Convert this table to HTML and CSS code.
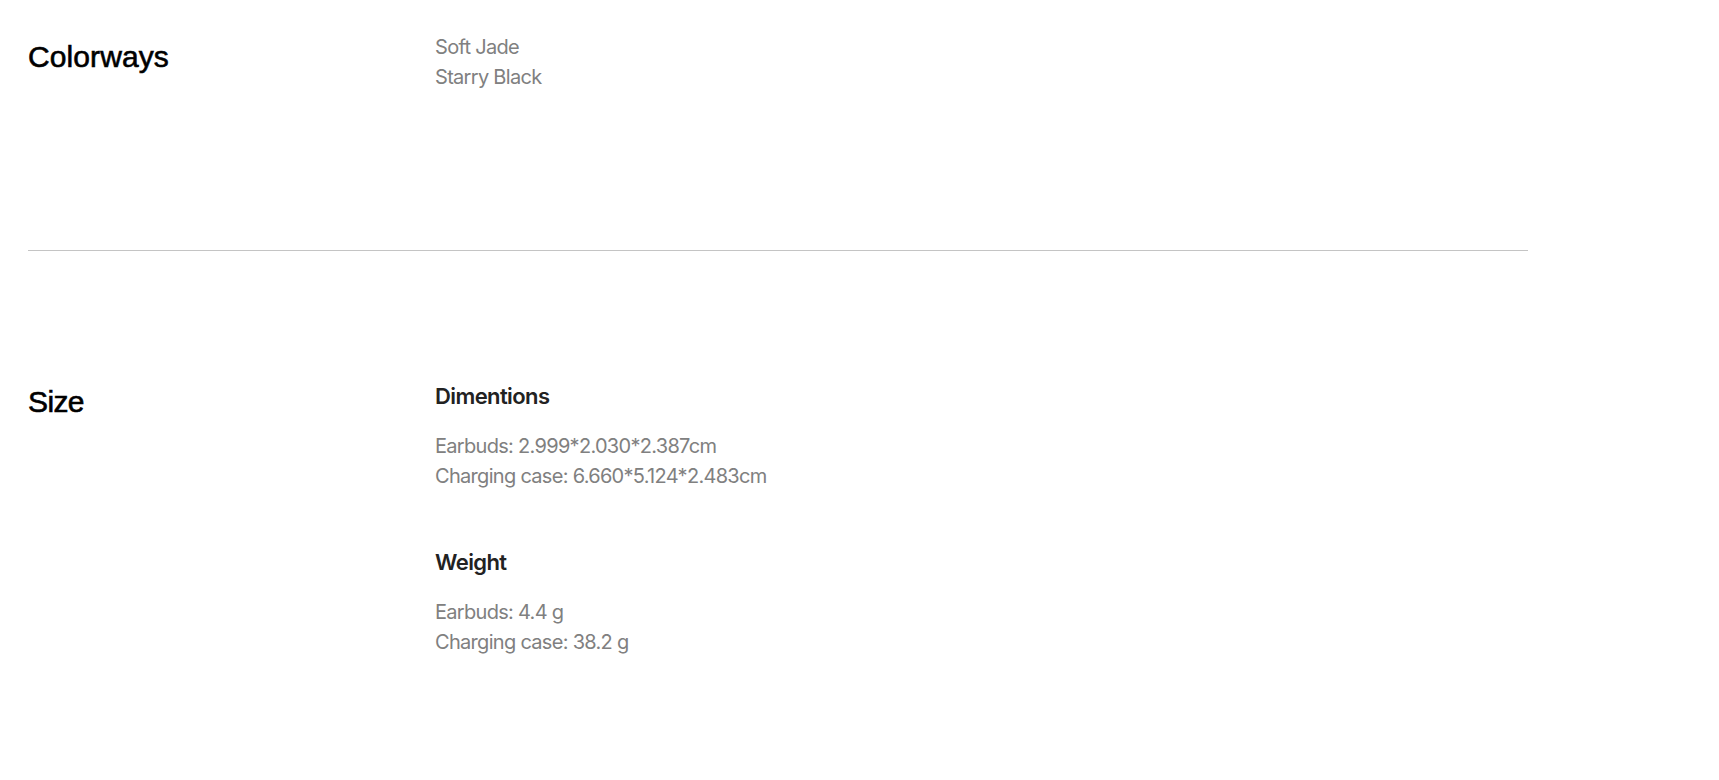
FILE: index.html
```html
<!DOCTYPE html>
<html lang="en">
<head>
<meta charset="utf-8">
<title>Specs</title>
<link rel="stylesheet" href="styles.css">
</head>
<body>
<div class="specs">
  <section class="spec-row spec-row--first">
    <h2 class="spec-title">Colorways</h2>
    <div class="spec-body">
      <div class="spec-group">
        <p class="spec-line">Soft Jade</p>
        <p class="spec-line">Starry Black</p>
      </div>
    </div>
  </section>
  <hr class="spec-divider">
  <section class="spec-row spec-row--second">
    <h2 class="spec-title spec-title--size">Size</h2>
    <div class="spec-body">
      <div class="spec-group">
        <h3 class="spec-sub">Dimentions</h3>
        <p class="spec-line">Earbuds: 2.999*2.030*2.387cm</p>
        <p class="spec-line">Charging case: 6.660*5.124*2.483cm</p>
      </div>
      <div class="spec-group">
        <h3 class="spec-sub">Weight</h3>
        <p class="spec-line">Earbuds: 4.4 g</p>
        <p class="spec-line">Charging case: 38.2 g</p>
      </div>
    </div>
  </section>
</div>
</body>
</html>
```

FILE: styles.css
```css
html, body {
  margin: 0;
  padding: 0;
  background: #ffffff;
}

body {
  font-family: Inter, "Noto Sans", sans-serif;
}

.specs {
  width: 1500px;
  margin-left: 28px;
}

.spec-row {
  display: flex;
  align-items: flex-start;
}

.spec-row--first {
  padding-top: 32px;
  padding-bottom: 158px;
}

.spec-row--second {
  padding-top: 130px;
  padding-bottom: 100px;
}

.spec-title {
  flex: 0 0 407px;
  margin: 7px 0 0 0;
  font-family: "Liberation Sans", Arial, sans-serif;
  font-weight: 400;
  font-size: 30px;
  line-height: 36px;
  letter-spacing: 0.1px;
  -webkit-text-stroke: 0.6px #000000;
  color: #000000;
}

.spec-title--size {
  margin-top: 3px;
  letter-spacing: -0.6px;
}

.spec-body {
  display: flex;
  flex-direction: column;
  gap: 56px;
}

.spec-group {
  display: flex;
  flex-direction: column;
}

.spec-sub {
  margin: 0 0 20px 0;
  font-size: 22px;
  line-height: 30px;
  font-weight: 600;
  letter-spacing: -0.6px;
  color: #222222;
}

.spec-line {
  margin: 0;
  font-size: 20px;
  line-height: 30px;
  font-weight: 400;
  letter-spacing: -0.7px;
  color: #808080;
}

.spec-divider {
  margin: 0;
  border: 0;
  height: 1px;
  background: #c4c4c4;
}
```
